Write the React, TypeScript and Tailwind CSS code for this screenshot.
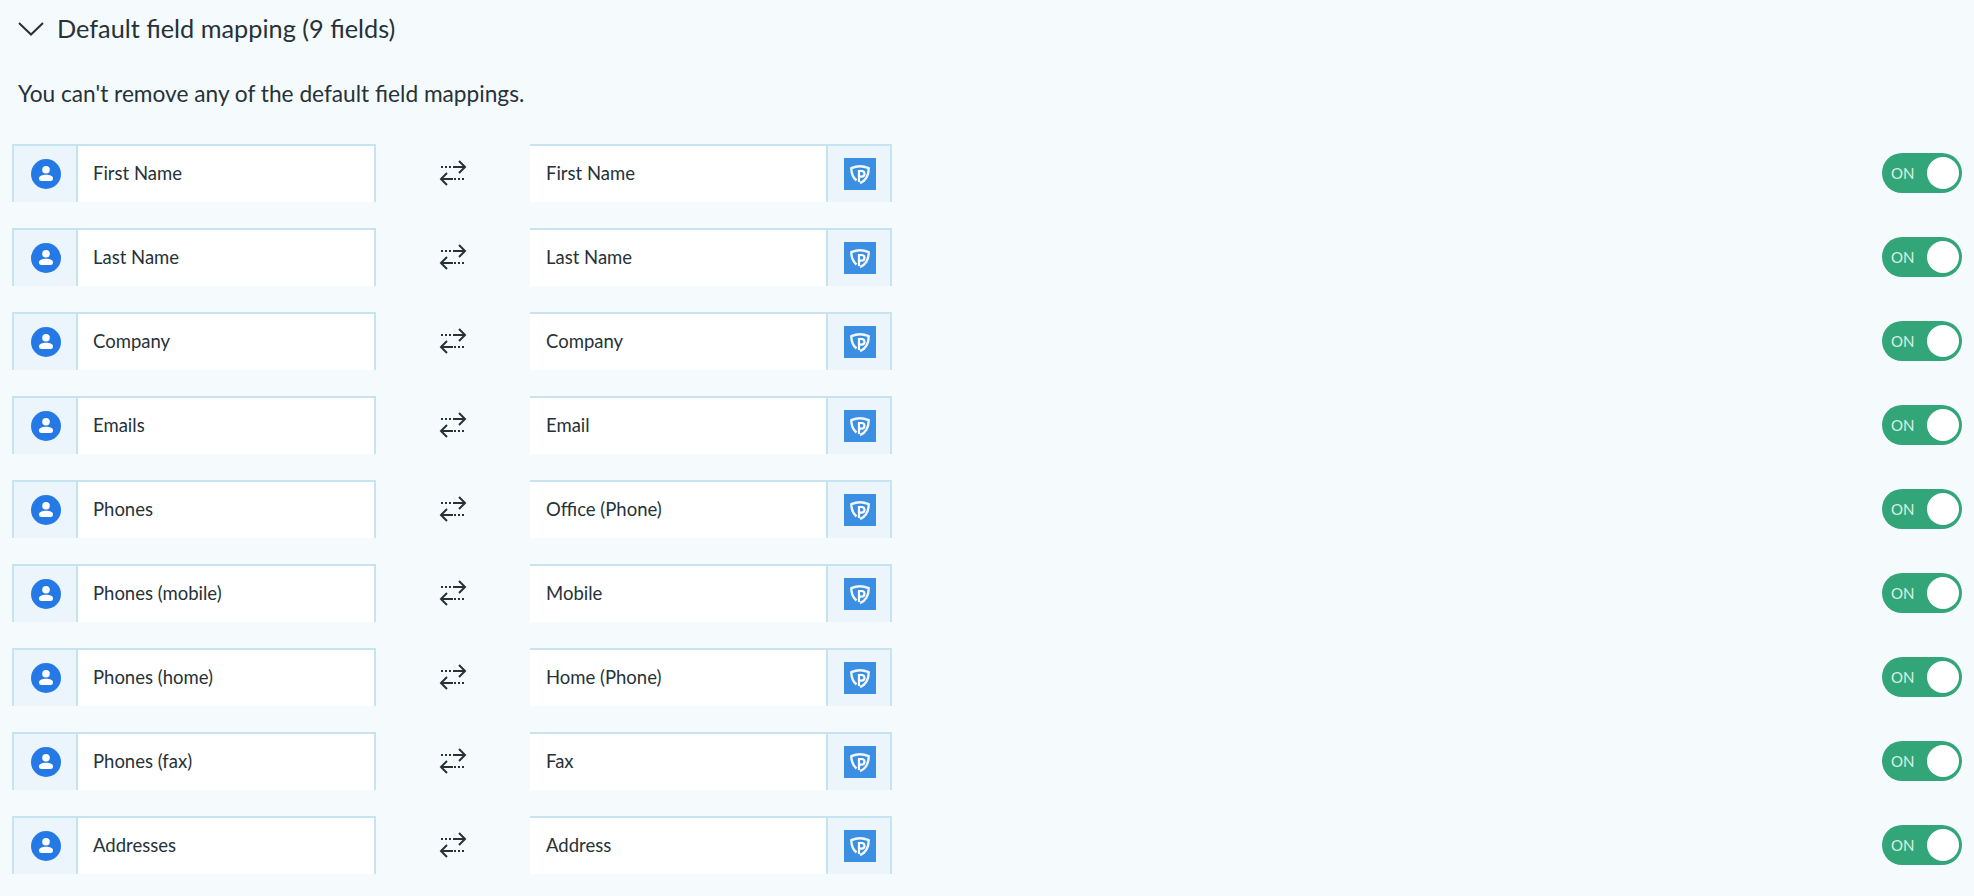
import React from 'react';

const rows = [
  ['First Name', 'First Name'],
  ['Last Name', 'Last Name'],
  ['Company', 'Company'],
  ['Emails', 'Email'],
  ['Phones', 'Office (Phone)'],
  ['Phones (mobile)', 'Mobile'],
  ['Phones (home)', 'Home (Phone)'],
  ['Phones (fax)', 'Fax'],
  ['Addresses', 'Address'],
];

const ContactIcon = () => (
  <svg width="30" height="30" viewBox="0 0 30 30">
    <circle cx="15" cy="15" r="15" fill="#2579e6" />
    <circle cx="15" cy="10.8" r="3.8" fill="#fff" />
    <path d="M8 19.5C8 17 11 15.8 15 15.8S22 17 22 19.5C22 21.2 21 22 19.5 22H10.5C9 22 8 21.2 8 19.5Z" fill="#fff" />
  </svg>
);

const ShieldIcon = () => (
  <svg width="32" height="32" viewBox="0 0 32 32" fill="none">
    <rect width="32" height="32" fill="#3b8fe2" />
    <path d="M12.5 22.5C9 19.5 7.3 16 7.3 10.2C10 9 13 8.2 16 8.2C19 8.2 22 9 24.7 10.2C24.7 17 22 22.5 16 25.2" stroke="#fff" strokeWidth="2.4" opacity="0.92" />
    <path d="M15 24V13H17.5C19.5 13 20.5 14.3 20.5 15.8C20.5 17.3 19.5 18.6 17.5 18.6H15.5" stroke="#fff" strokeWidth="2.2" />
  </svg>
);

const SwapIcon = () => (
  <svg width="28" height="26" viewBox="0 0 28 26" fill="none" stroke="#263238" strokeWidth="2">
    <path d="M2 7H13" strokeDasharray="2 2" />
    <path d="M14 7H26" />
    <path d="M20 1L26 7L20 13" />
    <path d="M2 19H14" />
    <path d="M15 19H26" strokeDasharray="2 2" />
    <path d="M8 13L2 19L8 25" />
  </svg>
);

const Toggle = () => (
  <div className="flex h-10 w-20 items-center justify-between rounded-full bg-[#32a679] pl-[9px] pr-[3px]">
    <span className="text-[15px] text-[#d9f0e6]">ON</span>
    <span className="h-8 w-8 rounded-full bg-white" />
  </div>
);

export default function App() {
  return (
    <div className="h-[896px] overflow-hidden bg-[#f5fafd] font-['Lato','Liberation_Sans',sans-serif] text-[#263238]">
      <div className="flex h-[58px] items-center pl-[18px]">
        <svg width="26" height="14" viewBox="0 0 26 14" fill="none" stroke="#263238" strokeWidth="2" className="mr-[13px]">
          <path d="M1 1L13 12.5L25 1" />
        </svg>
        <h2 className="text-[25.3px] leading-none">Default field mapping (9 fields)</h2>
      </div>
      <p className="mt-[21px] pl-[18px] text-[22.7px] leading-[30px]">You can't remove any of the default field mappings.</p>
      <div className="mt-[35px] flex flex-col gap-[26px] px-[12px]">
        {rows.map(([left, right]) => (
          <div key={left} className="flex items-center">
            <div className="flex h-[58px] w-[364px] border-x-2 border-t-2 border-[#c6e3f0] bg-white">
              <div className="flex w-[64px] items-center justify-center border-r-2 border-[#c6e3f0] bg-[#ecf5fb] pl-[2px]">
                <ContactIcon />
              </div>
              <div className="flex flex-1 items-center pl-[15px] text-[18.5px]">{left}</div>
            </div>
            <div className="flex w-[154px] justify-center">
              <SwapIcon />
            </div>
            <div className="flex h-[58px] w-[362px] border-r-2 border-t-2 border-[#c6e3f0] bg-white">
              <div className="flex flex-1 items-center pl-[16px] text-[18.5px]">{right}</div>
              <div className="flex w-[64px] items-center justify-center border-l-2 border-[#c6e3f0] bg-[#ecf5fb] pl-[2px]">
                <ShieldIcon />
              </div>
            </div>
            <div className="ml-auto">
              <Toggle />
            </div>
          </div>
        ))}
      </div>
    </div>
  );
}
